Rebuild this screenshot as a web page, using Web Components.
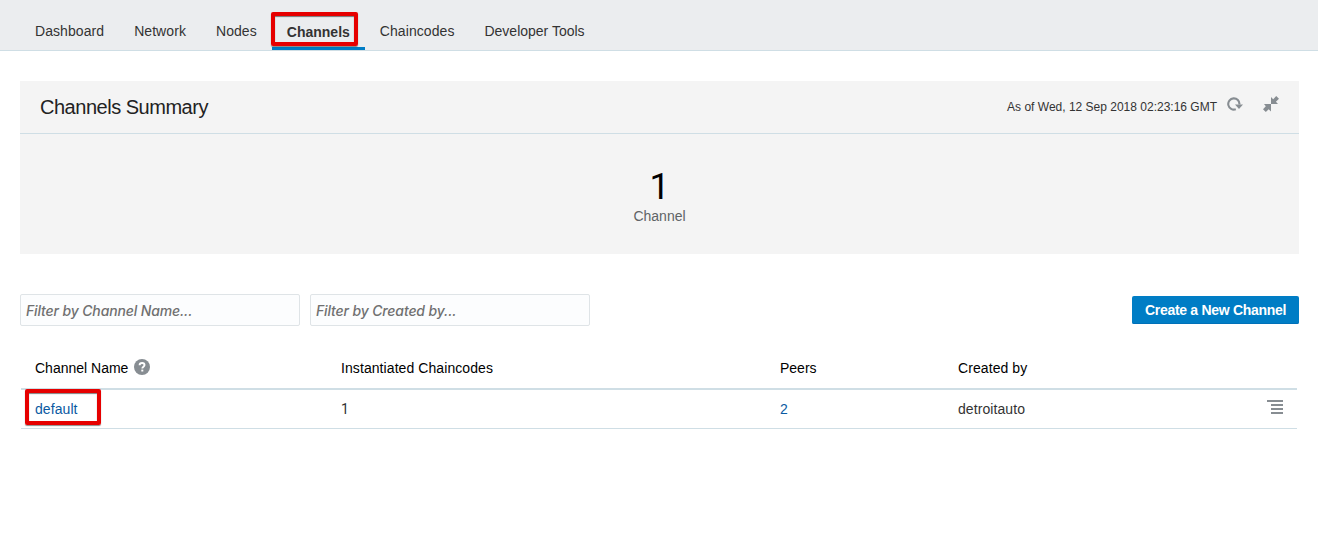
<!DOCTYPE html>
<html lang="en">
<head>
<meta charset="utf-8">
<title>Channels</title>
<style>
html, body { margin: 0; padding: 0; background: #fff; }
body { font: 14px/20px "Liberation Sans", Arial, sans-serif; color: #333; }
</style>
</head>
<body>
<app-page></app-page>
<script>
const define = (name, html) => customElements.define(name, class extends HTMLElement {
  constructor() {
    super();
    const t = document.createElement('template');
    t.innerHTML = html;
    this.attachShadow({ mode: 'open' }).append(t.content.cloneNode(true));
  }
});

define('callout-box', `
<style>
:host { display: block; position: absolute; box-sizing: border-box; border: 4px solid #e60000; border-radius: 2px; box-shadow: 0 1px 1px rgba(0,0,0,.45), inset 0 1px 1px rgba(0,0,0,.5); pointer-events: none; }
</style>`);

define('nav-tab', `
<style>
:host { display: block; position: relative; box-sizing: border-box; height: 50px; padding: 21px 15px 0; white-space: nowrap; letter-spacing: .07px; }
:host([selected]) { letter-spacing: 0; font-weight: bold; padding-top: 22px; border-bottom: 3px solid #007dc5; }
:host(:last-of-type) { letter-spacing: 0; }
</style><slot></slot>`);

define('nav-bar', `
<style>
:host { display: flex; box-sizing: border-box; height: 51px; padding-left: 20px; background: #ebedef; border-bottom: 1px solid #cfdee5; }
</style><slot></slot>`);

define('icon-refresh', `
<style>:host { display: block; width: 16px; height: 14px; } svg { display: block; }</style>
<svg width="16" height="14" viewBox="0 0 16 14"><path d="M8.8 12.2A5.6 5.6 0 1 1 12.4 7.5" fill="none" stroke="#878d92" stroke-width="2.1"/><path d="M8 7.5H16L12 12z" fill="#878d92"/></svg>`);

define('icon-collapse', `
<style>:host { display: block; width: 16px; height: 16px; } svg { display: block; }</style>
<svg width="16" height="16" viewBox="0 0 16 16" fill="#878d92"><path d="M8 8V1l2.2 2.2L13.2 0 16 2.8l-3.1 3L15 8z"/><path d="M8 8v7.5l-2.3-2.2L2.8 16 0 13.2l2.8-3L1 8z"/></svg>`);

define('icon-help', `
<style>:host { display: block; width: 16px; height: 16px; } svg { display: block; }</style>
<svg width="16" height="16" viewBox="0 0 16 16"><circle cx="8" cy="8" r="8" fill="#878d92"/><path d="M5.6 6.3C5.6 4.8 6.6 4 8.1 4s2.4.8 2.4 2c0 1.6-2.2 1.7-2.2 3.4" fill="none" stroke="#fff" stroke-width="1.9"/><rect x="7.3" y="10.6" width="2" height="1.9" fill="#fff"/></svg>`);

define('icon-menu', `
<style>:host { display: block; width: 16px; height: 14px; } svg { display: block; }</style>
<svg width="16" height="14" viewBox="0 0 16 14" fill="#878d92"><path d="M0 0h16v2H0zM4 4h12v2H4zM4 8h12v2H4zM4 12h12v2H4z"/></svg>`);

define('summary-panel', `
<style>
:host { display: block; box-sizing: border-box; height: 173px; background: #f4f4f4; }
header { display: flex; box-sizing: border-box; height: 53px; padding: 0 20px; border-bottom: 1px solid #cfdee5; }
.title { flex: 1; padding-top: 13px; font-size: 20px; line-height: 26px; letter-spacing: -.48px; color: #222; }
.time { padding-top: 16px; font-size: 12px; line-height: 20px; color: #333; }
icon-refresh { margin: 16px 0 0 10px; }
icon-collapse { margin: 15px 0 0 20px; }
.body { display: flex; flex-direction: column; align-items: center; padding-top: 33px; }
.num { font: 400 36px/40px Roboto, sans-serif; color: #000; }
.label { line-height: 20px; margin-top: -1px; color: #5f6366; }
</style>
<header><div class="title"><slot name="title"></slot></div><div class="time"><slot name="time"></slot></div><icon-refresh></icon-refresh><icon-collapse></icon-collapse></header>
<div class="body"><div class="num"><slot name="count"></slot></div><div class="label"><slot name="unit"></slot></div></div>`);

define('filter-field', `
<style>
:host { display: block; box-sizing: border-box; width: 280px; height: 32px; padding: 6px 5px; border: 1px solid #dfe4e7; border-radius: 2px; background: #fcfdfe; font: italic 500 14px/20px Inter, sans-serif; letter-spacing: -.14px; color: #707070; white-space: nowrap; }
</style><slot></slot>`);

define('action-button', `
<style>
:host { display: block; box-sizing: border-box; width: 167px; height: 28px; border-radius: 2px; background: #007dc5; box-shadow: inset 0 -1px #0070b8; color: #fff; font-weight: bold; line-height: 28px; text-align: center; white-space: nowrap; letter-spacing: -.3px; }
</style><slot></slot>`);

define('table-row', `
<style>
:host { display: grid; position: relative; grid-template-columns: 306px 439px 178px 1fr 16px; box-sizing: border-box; height: 39px; padding: 9px 14px 0; border-bottom: 1px solid #cfdee5; color: #333; }
:host([head]) { height: 42px; padding-top: 10px; border-bottom-width: 2px; color: #000; }
</style><slot></slot>`);

define('table-cell', `
<style>
:host { display: flex; gap: 6px; white-space: nowrap; }
:host([link]) { color: #0b5aa2; }
:host([count]) { font-family: Roboto, sans-serif; }
:host([wide]) { letter-spacing: .08px; }
::slotted(icon-help) { margin: 1px 0 0 -.5px; }
</style><slot></slot>`);

define('app-page', `
<style>
:host { display: block; height: 541px; overflow: hidden; }
main { padding: 30px 19px 0 20px; }
.tools { display: flex; gap: 10px; margin-top: 40px; height: 32px; }
action-button { margin: 2px 0 0 auto; }
.table { margin: 22px 2px 0 1px; }
icon-menu { margin-top: 1px; }
.tab-mark { left: -1px; top: 12px; width: 87px; height: 34px; }
.row-mark { left: 4px; top: -1px; width: 76px; height: 36px; }
</style>
<nav-bar>
<nav-tab>Dashboard</nav-tab><nav-tab>Network</nav-tab><nav-tab>Nodes</nav-tab><nav-tab selected>Channels<callout-box class="tab-mark"></callout-box></nav-tab><nav-tab>Chaincodes</nav-tab><nav-tab>Developer Tools</nav-tab>
</nav-bar>
<main>
<summary-panel><span slot="title">Channels Summary</span><span slot="time">As of Wed, 12 Sep 2018 02:23:16 GMT</span><span slot="count">1</span><span slot="unit">Channel</span></summary-panel>
<div class="tools"><filter-field>Filter by Channel Name...</filter-field><filter-field>Filter by Created by...</filter-field><action-button>Create a New Channel</action-button></div>
<div class="table">
<table-row head><table-cell>Channel Name<icon-help></icon-help></table-cell><table-cell wide>Instantiated Chaincodes</table-cell><table-cell>Peers</table-cell><table-cell wide>Created by</table-cell></table-row>
<table-row><table-cell link wide>default</table-cell><table-cell count>1</table-cell><table-cell link>2</table-cell><table-cell wide>detroitauto</table-cell><icon-menu></icon-menu><callout-box class="row-mark"></callout-box></table-row>
</div>
</main>`);
</script>
</body>
</html>
